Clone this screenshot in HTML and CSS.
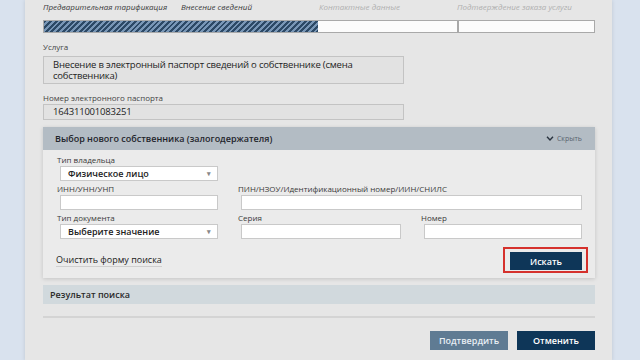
FILE: index.html
```html
<!DOCTYPE html>
<html lang="ru">
<head>
    <meta charset="UTF-8">
    <meta name="viewport" content="width=device-width, initial-scale=1.0">
    <title>Изменение собственника</title>
    <link rel="stylesheet" href="styles.css">
</head>
<body>
    <div class="page">
        <!-- шаги -->
        <div class="steps">
            <span class="step done">Предварительная тарификация</span>
            <span class="step done">Внесение сведений</span>
            <span class="step">Контактные данные</span>
            <span class="step">Подтверждение заказа услуги</span>
        </div>
        <div class="progress">
            <div class="progress-done"></div>
            <div class="progress-cell"></div>
            <div class="progress-cell"></div>
        </div>

        <p class="caption">Услуга</p>
        <div class="readonly">Внесение в электронный паспорт сведений о собственнике (смена собственника)</div>

        <p class="caption">Номер электронного паспорта</p>
        <div class="readonly">164311001083251</div>

        <div class="section">
            <div class="section-head">
                <span>Выбор нового собственника (залогодержателя)</span>
                <span class="toggle">
                    <svg width="8" height="5" viewBox="0 0 8 5"><path d="M1 0.8 L4 4 L7 0.8" fill="none" stroke="#2b3440" stroke-width="1.4"/></svg>
                    Скрыть
                </span>
            </div>
            <div class="section-body">
                <div class="form-grid">
                    <div class="fld">
                        <label>Тип владельца</label>
                        <div class="select">Физическое лицо<span class="arrow">▾</span></div>
                    </div>
                    <div></div>
                    <div></div>

                    <div class="fld">
                        <label>ИНН/УНН/УНП</label>
                        <div class="input"></div>
                    </div>
                    <div class="fld wide">
                        <label>ПИН/НЗОУ/Идентификационный номер/ИИН/СНИЛС</label>
                        <div class="input"></div>
                    </div>

                    <div class="fld">
                        <label>Тип документа</label>
                        <div class="select">Выберите значение<span class="arrow">▾</span></div>
                    </div>
                    <div class="fld">
                        <label>Серия</label>
                        <div class="input"></div>
                    </div>
                    <div class="fld">
                        <label>Номер</label>
                        <div class="input"></div>
                    </div>
                </div>
                <div class="form-foot">
                    <a class="clear-link">Очистить форму поиска</a>
                    <span class="highlight"><button class="btn btn-dark">Искать</button></span>
                </div>
            </div>
        </div>

        <div class="result">Результат поиска</div>
        <hr class="divider">

        <div class="actions">
            <button class="btn btn-muted">Подтвердить</button>
            <button class="btn btn-dark">Отменить</button>
        </div>
    </div>
</body>
</html>
```

FILE: styles.css
```css
/* общие стили */
body {
    font-family: "Open Sans", "Noto Sans", sans-serif;
    margin: 0;
    padding: 0;
    background-color: #d9e2ee;
    color: #222;
    height: 360px;
    overflow: hidden;
}
.page {
    width: 552px;
    margin-left: 25px;
    padding: 1px 17px 0 18px;
    min-height: 360px;
    background-color: #e6e6e6;
    box-shadow: 0 0 4px rgba(0, 0, 0, 0.12);
}

/* шаги */
.steps {
    display: grid;
    grid-template-columns: repeat(4, 1fr);
    height: 12px;
}
.step {
    font-size: 8px;
    line-height: 12px;
    font-style: italic;
    color: #b0b0b0;
}
.step.done {
    color: #3a3a3a;
}
.progress {
    display: grid;
    grid-template-columns: 2fr 1fr 1fr;
    height: 13px;
    margin-top: 7px;
    border: 1px solid #a9a9a9;
    box-sizing: border-box;
    background-color: #fcfcfc;
}
.progress-done {
    margin-right: 1px;
    background: repeating-linear-gradient(135deg, #2c4966 0 2px, #7896b6 2px 4px);
}
.progress-cell + .progress-cell {
    border-left: 2px solid #a9a9a9;
}

/* поля только для чтения */
.caption {
    margin: 9px 0 4px;
    font-size: 8px;
    line-height: 10px;
    color: #444;
}
.readonly {
    width: 361px;
    box-sizing: border-box;
    padding: 2px 20px 2px 9px;
    font-size: 9.5px;
    letter-spacing: -0.2px;
    line-height: 11px;
    background-color: #e2e2e2;
    border: 1px solid #c3c3c3;
}
.readonly + .caption {
    margin-top: 9px;
    margin-bottom: 1px;
}
.caption + .readonly + .caption + .readonly {
    line-height: 10px;
}

/* секция поиска */
.section {
    margin-top: 7px;
    box-shadow: 0 1px 4px rgba(0, 0, 0, 0.15);
}
.section-head {
    height: 23px;
    display: flex;
    justify-content: space-between;
    align-items: center;
    padding: 0 13px 0 12px;
    background-color: #b3bcc4;
    font-size: 9px;
    font-weight: 600;
    color: #1f252c;
}
.toggle {
    display: flex;
    align-items: center;
    gap: 3px;
    font-size: 7px;
    font-weight: 400;
    color: #5a6470;
}
.section-body {
    background-color: #ebebeb;
    padding: 5px 7px 5px 13px;
}
.form-grid {
    display: grid;
    grid-template-columns: 158px 160px 158px;
    column-gap: 23px;
    row-gap: 3px;
    padding-left: 4px;
}
.fld label {
    display: block;
    margin-left: -3px;
    margin-bottom: 1px;
    font-size: 8px;
    line-height: 10px;
    color: #3a3a3a;
}
.fld.wide {
    grid-column: span 2;
}
.input,
.select {
    height: 15px;
    box-sizing: border-box;
    background-color: #fff;
    border: 1px solid #c9c9c9;
}
.select {
    position: relative;
    padding-left: 7px;
    font-size: 9px;
    line-height: 13px;
    font-weight: 600;
    color: #222;
}
.arrow {
    position: absolute;
    right: 6px;
    top: 0;
    font-size: 7px;
    color: #888;
}
.form-foot {
    display: flex;
    justify-content: space-between;
    align-items: center;
    margin-top: 8px;
}
.clear-link {
    font-size: 9px;
    color: #222;
    border-bottom: 1px solid #cfcfcf;
}
.highlight {
    display: inline-block;
    padding: 3px 4px 1px 5px;
    border: 2px solid #d5312c;
}

/* кнопки */
.btn {
    height: 19px;
    width: 78px;
    border: none;
    padding: 0;
    font-family: inherit;
    font-size: 9px;
    font-weight: 600;
    color: #fff;
}
.highlight .btn {
    display: block;
    width: 72px;
    height: 18px;
}
.btn-dark {
    background-color: #0e3658;
}
.btn-muted {
    background-color: #5f7b93;
    color: #e8eef3;
}

/* результат */
.result {
    margin-top: 7px;
    height: 19px;
    line-height: 19px;
    padding-left: 7px;
    background-color: #d1d9dd;
    font-size: 9px;
    font-weight: 600;
    color: #2a2a2a;
}
.divider {
    margin: 12px 0 0;
    border: none;
    border-top: 2px solid #d4d4d4;
}
.actions {
    display: flex;
    justify-content: flex-end;
    gap: 9px;
    margin-top: 13px;
}
```
